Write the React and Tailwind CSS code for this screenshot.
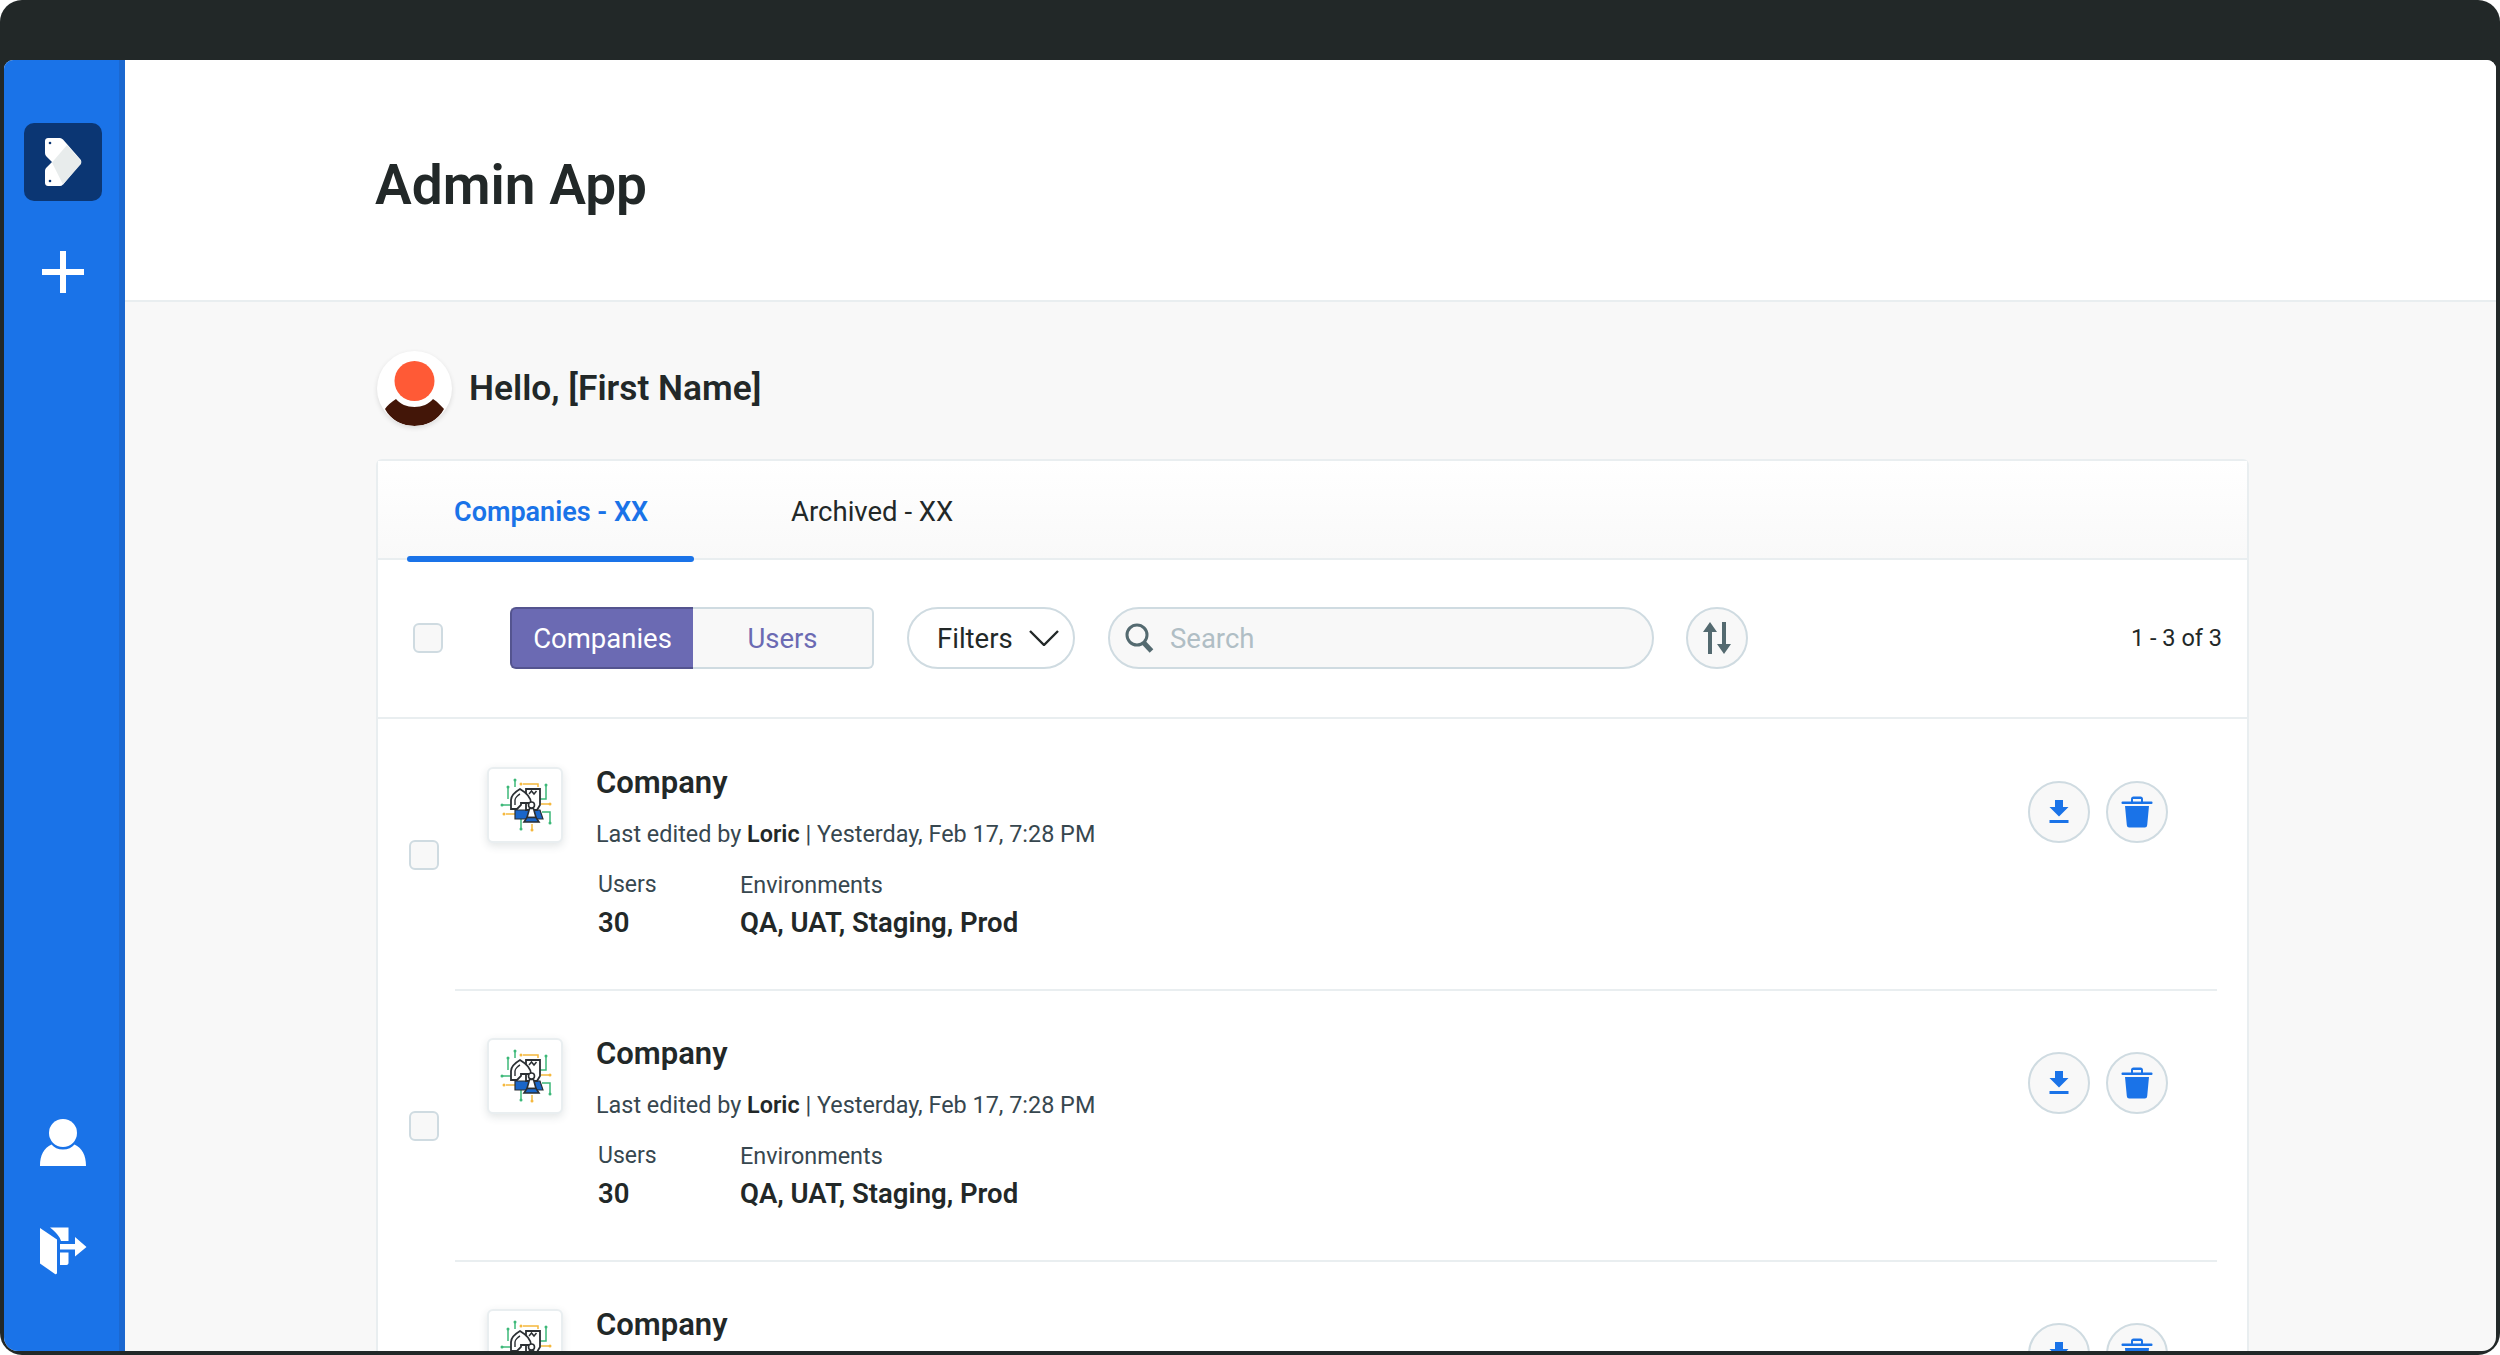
const font = { fontFamily: 'Roboto, sans-serif' };

function BrandMark() {
  return (
    <svg width="40" height="50" viewBox="0 0 40 50">
      <path d="M5 1h12c1 0 2 .5 3 1.500l17.500 20c1 1.200 1 2.800 0 4L20 47.500c-1 1-2 1.500-3 1.500H5c-1.500 0-3-1.300-3-3v-12c0-1 .3-2 1-3l6-6-6-6c-.7-1-1-2-1-3V4c0-1.700 1.500-3 3-3z" fill="#fff" />
      <path d="M24 8l13.500 15.500c1 1.200 1 2.800 0 4L20 47.500l-11-22z" fill="#e8ecec" />
      <circle cx="7" cy="6" r="1.300" fill="#0b3673" />
      <circle cx="7" cy="44" r="1.300" fill="#0b3673" />
    </svg>
  );
}

function PersonIcon() {
  return (
    <svg width="48" height="48" viewBox="0 0 48 48" fill="#fff">
      <circle cx="24" cy="14" r="14" />
      <path d="M1 47c0-11 4-18 11.500-21.500 2.500 3 6.500 5 11.500 5s9-2 11.500-5C43 29 47 36 47 47z" />
    </svg>
  );
}

function ExitIcon() {
  return (
    <svg width="48" height="48" viewBox="0 0 48 48" fill="#fff">
      <path d="M1 1l17 11.500V46c0 1-1 1.500-2 1L1 36.500z" />
      <path d="M11 .500h18.500V14H22c-1-4-5-9-11-13.500z" />
      <path d="M21 25.500h8.500V36c0 1-1 2-2 2H21z" />
      <path d="M21 17h15V10l11.500 10L36 29.500V22.500H21z" />
    </svg>
  );
}

function Avatar() {
  return (
    <div className="w-[75px] h-[75px] rounded-full bg-white shadow-[0_2px_5px_rgba(0,0,0,0.12)] shrink-0 overflow-hidden">
      <svg width="75" height="75" viewBox="0 0 75 75">
        <ellipse cx="37.500" cy="30" rx="20" ry="20" fill="#ff5a36" />
        <path d="M19 48c4 5 11 8 18.500 8s14.500-3 18.500-8c5 3 9 8 11 10-6 11-17 17-29.500 17S14 69 8 58c2-3 6-7 11-10z" fill="#431608" />
      </svg>
    </div>
  );
}

function CompanyArt() {
  return (
    <svg width="56" height="56" viewBox="0 0 56 56" fill="none">
      <g stroke="#3cb878" strokeWidth="1.500">
        <path d="M18 3v7" />
        <path d="M11 10v12" />
        <path d="M5 28h9" />
        <path d="M43 22h6V8" />
        <path d="M45 35h8v10" />
        <path d="M24 42v9" />
      </g>
      <g fill="#3cb878">
        <circle cx="18" cy="3" r="1.500" />
        <circle cx="11" cy="10" r="1.500" />
        <circle cx="5" cy="28" r="1.500" />
        <circle cx="49" cy="8" r="1.500" />
        <circle cx="53" cy="46" r="1.500" />
        <circle cx="24" cy="52" r="1.500" />
      </g>
      <g stroke="#f5b83d" strokeWidth="1.500">
        <path d="M26 7h15v3" />
        <path d="M9 37h9" />
        <path d="M44 27h8" />
        <path d="M35 47v5" />
      </g>
      <g fill="#f5b83d">
        <circle cx="24" cy="7" r="1.500" />
        <circle cx="7" cy="37" r="1.500" />
        <circle cx="53" cy="27" r="1.500" />
        <circle cx="35" cy="53" r="1.500" />
      </g>
      <path d="M18 33h25l3 9H18z" fill="#1a66c9" stroke="#2b2f33" strokeWidth="1.200" />
      <path d="M29 12h14v16l-3 5H29z" fill="#fff" stroke="#2b2f33" strokeWidth="1.800" />
      <path d="M32 17l2.500-3 2.500 3 2.500-3" stroke="#2b2f33" strokeWidth="1.500" />
      <path d="M14 32V23c0-4 4-8 9-11 5 3 11 8 11 14H24v2l-4 4z" fill="#fff" stroke="#2b2f33" strokeWidth="1.800" />
      <path d="M18 28v-5c0-2 3-5 5-6" stroke="#2b2f33" strokeWidth="1.400" />
      <circle cx="34.500" cy="28" r="3" fill="#fff" stroke="#2b2f33" strokeWidth="1.600" />
      <path d="M32.500 31.500h4l2.500 9h-9z" fill="#fff" stroke="#2b2f33" strokeWidth="1.600" />
      <path d="M27 45l3-4.500h9l3 4.500z" fill="#1a66c9" stroke="#2b2f33" strokeWidth="1.600" />
    </svg>
  );
}

function Checkbox() {
  return <div className="w-[30px] h-[30px] rounded-[6px] border-[2px] border-[#cfdbe1] bg-[#f8f8f8] shrink-0" />;
}

function CompanyRow() {
  return (
    <div className="h-[271px] shrink-0 flex pl-[31px] pr-[30px]">
      <div className="pt-[120px] shrink-0">
        <Checkbox />
      </div>
      <div className="ml-[16px] flex-1 min-w-0 border-b-2 border-[#e9eef0] flex items-start pt-[47px] pl-[32px] pr-[49px]">
        <div className="w-[76px] h-[76px] rounded-[6px] bg-white border-2 border-[#e9eef0] shadow-[0_3px_8px_rgba(50,70,80,0.14)] flex items-center justify-center shrink-0">
          <CompanyArt />
        </div>
        <div className="ml-[33px] -mt-[2px] flex-1 text-[#222828]">
          <div className="text-[31px] leading-[36px] font-semibold">Company</div>
          <div className="mt-[18px] text-[23.400px] leading-[30px] text-[#37474f]">
            Last edited by <span className="font-semibold text-[#222828]">Loric</span> | Yesterday, Feb 17, 7:28 PM
          </div>
          <div className="mt-[21px] flex">
            <div className="w-[144px] pl-[2px]">
              <div className="text-[23px] leading-[30px] text-[#37474f]">Users</div>
              <div className="mt-[7px] text-[27.500px] leading-[32px] font-semibold">30</div>
            </div>
            <div>
              <div className="text-[23.400px] leading-[30px] text-[#37474f]">Environments</div>
              <div className="mt-[7px] text-[27.500px] leading-[32px] font-semibold">QA, UAT, Staging, Prod</div>
            </div>
          </div>
        </div>
        <div className="flex gap-[16px] mt-[14px] shrink-0">
          <button className="w-[62px] h-[62px] rounded-full bg-[#f8f8f8] border-2 border-[#cfdbe1] flex items-center justify-center">
            <svg width="20" height="24" viewBox="0 0 20 24" fill="#1a73e8">
              <path d="M6 0h8v7h5.500L10 16.500.5 7H6z" />
              <rect x="0.500" y="20" width="19" height="3" />
            </svg>
          </button>
          <button className="w-[62px] h-[62px] rounded-full bg-[#f8f8f8] border-2 border-[#cfdbe1] flex items-center justify-center">
            <svg width="32" height="32" viewBox="0 0 32 32" fill="#1a73e8">
              <path d="M10 6V3c0-1.500 1-2.500 2.500-2.500h7C21 .5 22 1.500 22 3v3h-2V3h-8v3z" />
              <rect x="0.500" y="5.500" width="31" height="2.500" rx="1" />
              <path d="M4 10h24l-1.800 19c-.2 1.700-1 2.500-2.500 2.500H8.300c-1.500 0-2.300-.8-2.500-2.500z" />
            </svg>
          </button>
        </div>
      </div>
    </div>
  );
}

export default function App() {
  return (
    <div className="w-[2500px] h-[1355px] bg-white overflow-hidden" style={font}>
      <div className="w-full h-full bg-[#222828] rounded-[22px] pt-[60px] px-[4px] pb-[4px]">
        <div className="w-full h-full rounded-t-[9px] rounded-b-[14px] overflow-hidden flex bg-[#f8f8f8]">
          <aside className="w-[121px] h-full bg-[#1a73e8] border-r-[6px] border-[#1b68d0] flex flex-col items-center shrink-0 pt-[63px] pb-[76px]">
            <div className="w-[78px] h-[78px] rounded-[10px] bg-[#0b3673] flex items-center justify-center ml-[3px]">
              <BrandMark />
            </div>
            <svg className="mt-[50px] ml-[3px]" width="42" height="42" viewBox="0 0 42 42" fill="#fff">
              <rect x="18" y="0" width="6" height="42" />
              <rect x="0" y="18" width="42" height="6" />
            </svg>
            <div className="mt-auto ml-[3px]">
              <PersonIcon />
            </div>
            <div className="mt-[60px] ml-[3px]">
              <ExitIcon />
            </div>
          </aside>

          <main className="flex-1 min-w-0 h-full flex flex-col">
            <header className="h-[242px] shrink-0 bg-white border-b-2 border-[#e9eef0] flex items-center pl-[250px] pt-[11px]">
              <h1 className="text-[55px] font-semibold text-[#222828] leading-none">Admin App</h1>
            </header>

            <div className="flex items-center gap-[17px] pl-[252px] pt-[49px] shrink-0">
              <Avatar />
              <div className="text-[35.300px] font-semibold text-[#222828]">Hello, [First Name]</div>
            </div>

            <section className="mt-[33px] ml-[251px] w-[1873px] flex-1 min-h-0 bg-white border-2 border-b-0 border-[#e9eef0] rounded-t-[6px] flex flex-col">
              <div className="relative h-[99px] shrink-0 border-b-2 border-[#e9eef0] bg-gradient-to-b from-white to-[#f9f9f9] flex items-center pt-[5px]">
                <div className="text-[27px] font-semibold text-[#1a73e8] ml-[76px]">Companies - XX</div>
                <div className="text-[27.500px] text-[#222828] ml-[143px]">Archived - XX</div>
                <div className="absolute left-[29px] bottom-[-4px] w-[287px] h-[6px] rounded-full bg-[#1a73e8]" />
              </div>

              <div className="h-[159px] shrink-0 border-b-2 border-[#e9eef0] flex items-center pl-[35px] pr-[25px] pb-[2px]">
                <Checkbox />
                <div className="ml-[67px] flex h-[62px] w-[364px]">
                  <div className="w-[183px] h-full bg-[#6b6ab3] border-2 border-r-0 border-[#54548f] rounded-l-[6px] text-white text-[27.500px] flex items-center justify-center pt-[2px]">Companies</div>
                  <div className="flex-1 h-full bg-[#f8f8f8] border-2 border-l-0 border-[#cfdbe1] rounded-r-[6px] text-[#6b6ab3] text-[27.500px] flex items-center justify-center pt-[2px]">Users</div>
                </div>
                <button className="ml-[33px] w-[168px] h-[62px] rounded-full bg-white border-2 border-[#cfdbe1] flex items-center text-[27.500px] text-[#222828] pl-[28px]">
                  <span className="pt-[2px]">Filters</span>
                  <svg className="ml-[16px]" width="30" height="16" viewBox="0 0 30 16" fill="none" stroke="#222828" strokeWidth="2.400">
                    <path d="M1 1l14 14L29 1" />
                  </svg>
                </button>
                <div className="ml-[33px] w-[546px] h-[62px] rounded-full bg-[#f8f8f8] border-2 border-[#cfdbe1] flex items-center pl-[15px]">
                  <svg width="30" height="30" viewBox="0 0 30 30" fill="none" stroke="#546a70">
                    <circle cx="12" cy="12" r="10" strokeWidth="3" />
                    <path d="M19 20l7.500 8" strokeWidth="5" />
                  </svg>
                  <span className="ml-[15px] text-[27.500px] text-[#b0bec5] pt-[2px]">Search</span>
                </div>
                <button className="ml-[32px] w-[62px] h-[62px] rounded-full bg-[#f8f8f8] border-2 border-[#cfdbe1] flex items-center justify-center">
                  <svg width="30" height="32" viewBox="0 0 30 32" fill="#546a70">
                    <path d="M6 0l7 10H8v22H4V10H-1z" transform="translate(2 0)" />
                    <path d="M24 32l-7-10h5V0h4v22h5z" transform="translate(-2 0)" />
                  </svg>
                </button>
                <div className="ml-auto text-[23.500px] text-[#222828] pt-[2px]">1 - 3 of 3</div>
              </div>

              <div className="flex-1 min-h-0 overflow-hidden flex flex-col pt-[1px]">
                <CompanyRow />
                <CompanyRow />
                <CompanyRow />
              </div>
            </section>
          </main>
        </div>
      </div>
    </div>
  );
}
